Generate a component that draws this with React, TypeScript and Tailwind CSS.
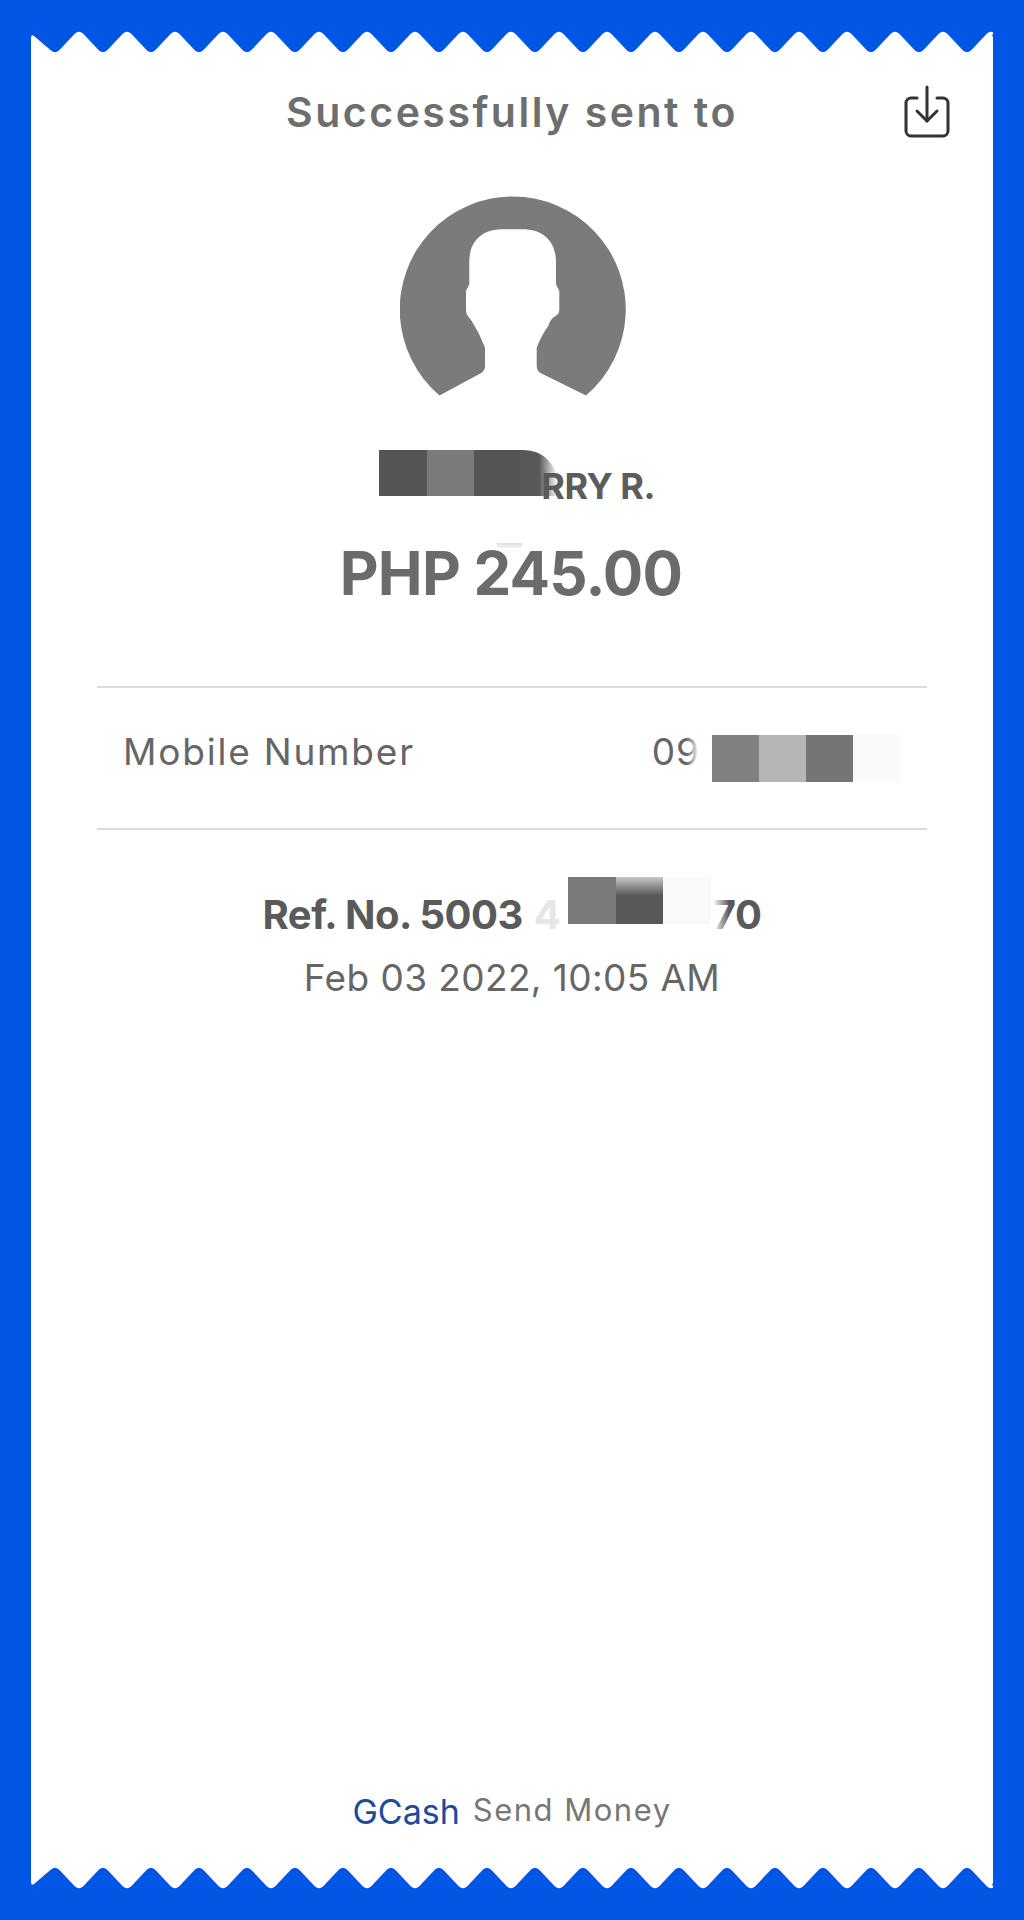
import React from "react";

// zigzag edge of the receipt, rounded at every tip
const buildTeethPath = () => {
  const pts: number[][] = [];
  for (let x = 24; x < 962; x += 24) {
    pts.push([x, (x / 24) % 2 === 1 ? 23 : -1]);
  }
  let d = "M0 24 L0 7 Q0 3 3 5";
  for (const [x, y] of pts) {
    const dy = y < 0 ? 3.5 : -3.5;
    d += ` L${x - 4} ${y + dy} Q${x} ${y} ${x + 4} ${y + dy}`;
  }
  d += " L959 5 Q962 3 962 7 L962 24 Z";
  return d;
};

const teeth = buildTeethPath();

const Teeth = ({ flip }: { flip?: boolean }) => (
  <svg
    className={flip ? "block w-[962px] h-[24px] -scale-y-100" : "block w-[962px] h-[24px]"}
    viewBox="0 0 962 24"
  >
    <path d={teeth} fill="#ffffff" />
  </svg>
);

const App: React.FC = () => {
  return (
    <main className="w-[1024px] h-[1920px] bg-[#0256e4] pt-[31px] pl-[31px] font-['Inter',sans-serif]">
      <div className="w-[962px] h-[1858px] flex flex-col">
        <Teeth />
        <div className="flex-1 bg-white flex flex-col pt-[29px]">
          <div className="grid grid-cols-[1fr_auto_1fr] items-center px-[42px] h-[56px]">
            <div></div>
            <h1 className="text-[41px] leading-[56px] font-semibold tracking-[2.5px] text-[#6e6e6e]">
              Successfully sent to
            </h1>
            <div className="flex justify-end">
              <svg className="w-[48px] h-[56px]" viewBox="0 0 48 56" fill="none" stroke="#333333" strokeWidth="3" strokeLinecap="round" strokeLinejoin="round">
                <path d="M14 14H8a5 5 0 0 0-5 5v28a5 5 0 0 0 5 5h32a5 5 0 0 0 5-5V19a5 5 0 0 0-5-5h-6" />
                <path d="M24 3v34" />
                <path d="M14 27l10 10 10-10" />
              </svg>
            </div>
          </div>

          <div className="flex justify-center mt-[56px] pl-[2px]">
            <svg className="w-[226px] h-[200px]" viewBox="0 0 226 200">
              <path
                fill="#7b7b7b"
                d="M39.5 199.5A113 113 0 1 1 186 199.5L140 176.7Q136.7 174 136.7 170V151.7Q142 138 148.3 130Q150 124 153 121.7L157 119Q159.3 117 159.3 114V95L156 88.3V66C156 46 144 33.3 122 33.3H103C81 33.3 69.3 46 69.3 66V88.3L66 95V114Q66 118 68 120L71.7 125Q80 138 85 151.7V170Q85 174 81.7 176.7Z"
              />
            </svg>
          </div>

          <div className="relative w-[276px] ml-[348px] mt-[67px] h-[46px] text-right text-[36px] leading-[46px] font-bold text-[#5c5c5c] tracking-[-0.5px]">
            RRY R.
            <div className="absolute left-0 -top-[13px] h-[46px] flex">
              <div className="w-[48px] bg-[#555555]"></div>
              <div className="w-[47px] bg-[#7a7a7a]"></div>
              <div className="w-[46px] bg-[#555555]"></div>
              <div className="w-[38px] rounded-tr-[34px] bg-linear-to-r from-[#585858] via-[#585858] to-transparent"></div>
            </div>
          </div>

          <div className="relative mt-[34px] h-[60px] text-center text-[60px] leading-[60px] font-bold text-[#6b6b6b] tracking-[-0.8px] pr-[2px]">
            PHP 245.00
            <div className="absolute left-[466px] top-0 w-[25px] h-[5px] bg-linear-to-b from-[#e0e0e0] to-[#f4f4f4]"></div>
          </div>

          <div className="mt-[83px] mx-[66px] h-[144px] border-y-2 border-[#dcdcdc] flex justify-between pl-[26px] pr-[26px]">
            <span className="mt-[41px] text-[37px] leading-[46px] text-[#666666] tracking-[1.8px]">Mobile Number</span>
            <div className="flex items-center">
              <span className="relative mt-[-12px] text-[37px] leading-[46px] text-[#666666] tracking-[1px]">
                09
                <span className="absolute right-0 top-0 w-[14px] h-full bg-linear-to-r from-transparent to-white"></span>
              </span>
              <div className="flex h-[47px] ml-[12px]">
                <div className="w-[47px] bg-[#808080]"></div>
                <div className="w-[47px] bg-[#b5b5b5]"></div>
                <div className="w-[47px] bg-[#757575]"></div>
                <div className="w-[48px] bg-[#fafafa]"></div>
              </div>
            </div>
          </div>

          <div className="mt-[47px] flex justify-center items-start h-[61px] text-[40px] leading-[46px] font-bold text-[#5a5a5a] tracking-[-0.5px]">
            <span className="mt-[15px]">Ref. No. 5003</span>
            <span className="mt-[15px] ml-[11px] w-[34px] text-[#e6e6e6]">4</span>
            <div className="flex h-[47px]">
              <div className="w-[48px] bg-[#7a7a7a]"></div>
              <div className="w-[47px] bg-linear-to-b from-[#c8c8c8] to-[#585858] to-40%"></div>
              <div className="w-[48px] bg-[#f9f9f9]"></div>
            </div>
            <span className="relative mt-[15px] ml-[2px]">
              70
              <span className="absolute left-0 top-0 w-[16px] h-full bg-linear-to-r from-white to-transparent"></span>
            </span>
          </div>

          <div className="mt-[18px] h-[44px] text-center text-[37px] leading-[44px] text-[#666666] tracking-[0.4px]">
            Feb 03 2022, 10:05 AM
          </div>

          <div className="mt-auto mb-[34px] h-[40px] flex justify-center items-center gap-[13px]">
            <span className="text-[34px] leading-[40px] text-[#1d4a9c] mt-[2px]">GCash</span>
            <span className="text-[31px] leading-[40px] text-[#777777] tracking-[1.5px] mt-[-2px]">Send Money</span>
          </div>
        </div>
        <Teeth flip />
      </div>
    </main>
  );
};

export default App;
